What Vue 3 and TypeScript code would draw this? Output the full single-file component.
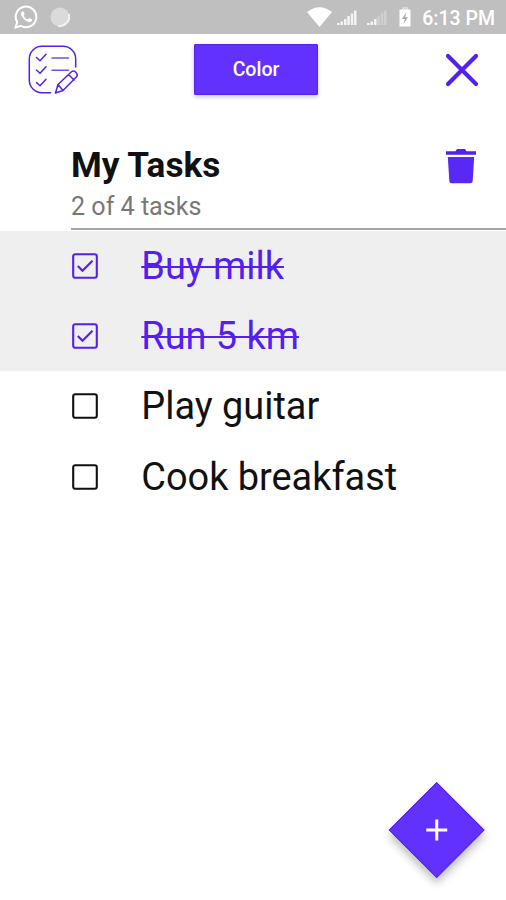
<script setup lang="ts">
import { computed, ref } from 'vue'

interface Task {
  id: number
  title: string
  done: boolean
}

const tasks = ref<Task[]>([
  { id: 1, title: 'Buy milk', done: true },
  { id: 2, title: 'Run 5 km', done: true },
  { id: 3, title: 'Play guitar', done: false },
  { id: 4, title: 'Cook breakfast', done: false },
])

const doneCount = computed(() => tasks.value.filter((t) => t.done).length)

function toggle(task: Task): void {
  task.done = !task.done
}
</script>

<template>
  <div class="screen">
    <header class="status">
      <svg class="whatsapp" viewBox="0 0 24 24">
        <path d="M1.5 22.5 3.2 17.2A10.3 10.3 0 1 1 7 20.9Z" fill="none" stroke="#fff" stroke-width="2" />
        <path d="M8.2 6.4c-1.8 1-1.5 3.4.4 6.1 2.4 3.4 5.6 5 7.8 4.4 1.3-.4 1.900-1.600 1.600-2.500l-2.700-1.400-1.400 1.500c-2-.7-3.300-2-4.200-3.800l1-1.500-1.200-2.700z" fill="#fff" />
      </svg>
      <svg class="sync" viewBox="0 0 20 20">
        <circle cx="10" cy="10" r="9.500" fill="#dadada" />
        <path d="M18.800 7A9.300 9.300 0 0 1 8 18.800" fill="none" stroke="#f4f4f4" stroke-width="1.800" />
      </svg>
      <span class="grow"></span>
      <svg class="wifi" viewBox="0 0 25 20"><path d="M0 5Q12.500-4.500 25 5L12.500 20Z" fill="#fff" /></svg>
      <svg class="signal" viewBox="0 0 20 16">
        <path d="M0 13h2.500v2H0zM3.500 11.500H6V15H3.500zM7 9h2.500v6H7zM10.300 6h2.500v9h-2.500zM13.800 3.500h2.500V15h-2.500zM17 .5h2.500V15H17z" fill="#f4f4f4" />
      </svg>
      <svg class="signal second" viewBox="0 0 20 16">
        <path d="M0 13h2.500v2H0zM3.500 11.500H6V15H3.500zM7 9h2.500v6H7z" fill="#f4f4f4" />
        <path d="M10.300 6h2.500v9h-2.500zM13.800 3.500h2.500V15h-2.500zM17 .5h2.500V15H17z" fill="#d0d0d0" />
      </svg>
      <svg class="battery" viewBox="0 0 12 20">
        <path d="M3 0h6v3H3z" fill="#d8d8d8" />
        <path d="M.5 2.500h11v17H.5z" fill="#fff" />
        <path d="M7.500 5 3 12h2.800L4.500 17 9 10.200H6.200z" fill="#a9a9a9" />
      </svg>
      <span class="time">6:13 PM</span>
    </header>

    <nav class="toolbar">
      <svg class="logo" viewBox="0 0 52 50">
        <g fill="none" stroke="#5322e6" stroke-width="1.500" stroke-linecap="round" stroke-linejoin="round">
          <path d="M22.500 47.700H14A12.600 12.600 0 0 1 1.300 35V14A12.600 12.600 0 0 1 14 1.300h21A12.600 12.600 0 0 1 47.700 14v8" />
          <path d="m8.500 12.500 3.500 3.300 6-6.500M8.500 25l3.500 3.300 6-6.500M8.500 37.500l3.500 3.300 6-6.500" />
          <path d="M24 13h16.500M24 25.300h16.500" stroke="#7250ef" />
          <path d="m27.500 48 2.500-8.500 13.500-12.700q2-1.700 4 .2l1 1.200q1.700 1.900-.2 3.800L35 45.500ZM30 39.500l5 6M40.500 29.500l5.500 5.500" />
        </g>
      </svg>
      <button class="color">Color</button>
      <svg class="close" viewBox="0 0 34 34">
        <path d="M3 3 31 31M31 3 3 31" stroke="#5420f2" stroke-width="4.200" stroke-linecap="round" />
      </svg>
    </nav>

    <section class="heading">
      <div class="titles">
        <h1>My Tasks</h1>
        <p>{{ doneCount }} of {{ tasks.length }} tasks</p>
      </div>
      <svg class="trash" viewBox="0 0 32 36">
        <path d="M1 3.200h9.500L12 1h8l1.500 2.200H31v3.600H1z" fill="#5420ed" />
        <path d="M2.800 9h26.400l-1.500 24q-.2 2.200-2.300 2.200H6.600Q4.500 35.200 4.300 33z" fill="#5828f5" />
      </svg>
    </section>

    <ul class="list">
      <li v-for="task in tasks" :key="task.id" :class="{ done: task.done }" @click="toggle(task)">
        <svg class="box" viewBox="0 0 26 26">
          <rect x="1.200" y="1.200" width="23.600" height="23.600" rx="2" fill="none" stroke="currentColor" stroke-width="2.100" />
          <path v-if="task.done" d="m5.800 13 4.700 4.700L20.500 7.800" fill="none" stroke="currentColor" stroke-width="2.200" />
        </svg>
        <span class="label">{{ task.title }}</span>
      </li>
    </ul>

    <button class="add">
      <svg viewBox="0 0 22 22"><path d="M11 .5v21M.5 11h21" stroke="#fff" stroke-width="3" /></svg>
    </button>
  </div>
</template>

<style>
body {
  margin: 0;
  background: #fff;
}
</style>

<style scoped>
.screen {
  position: relative;
  width: 506px;
  height: 900px;
  overflow: hidden;
  background: #fff;
  color: #111;
  font-family: Roboto, "Liberation Sans", sans-serif;
}
svg {
  display: block;
  flex: none;
}
.status {
  display: flex;
  align-items: center;
  box-sizing: border-box;
  height: 34px;
  padding: 0 11px 0 14px;
  background: #bfbfbf;
}
.whatsapp {
  width: 24px;
  height: 24px;
}
.sync {
  width: 20px;
  height: 20px;
  margin-left: 11.500px;
}
.grow {
  flex: 1;
}
.wifi {
  width: 25px;
  height: 20px;
}
.signal {
  width: 20px;
  height: 16px;
  margin: 2px 0 0 5px;
}
.second {
  margin-left: 10px;
}
.battery {
  width: 12px;
  height: 20px;
  margin: 0 11px 0 12px;
}
.time {
  color: #fff;
  font-size: 19.500px;
  font-weight: 500;
  line-height: 34px;
  padding-top: 4px;
}
.toolbar {
  display: flex;
  justify-content: space-between;
  align-items: center;
  height: 70px;
  padding: 0 27px 0 28px;
}
.logo {
  width: 52px;
  height: 50px;
  margin-top: 2px;
}
button {
  border: 0;
  padding: 0;
  cursor: pointer;
}
.color {
  width: 124px;
  height: 51px;
  margin-left: -13px;
  border-radius: 2px;
  background: #6331fd;
  box-shadow: inset 0 0 0 1px #5520f0, 0 2px 4px rgba(60, 50, 110, 0.28);
  color: #fff;
  font: 500 19.500px/52px Roboto, sans-serif;
}
.close {
  width: 34px;
  height: 34px;
  margin-top: 1px;
}
.heading {
  position: relative;
  display: flex;
  justify-content: space-between;
  box-sizing: border-box;
  height: 127px;
  margin-left: 71px;
  padding: 41px 29px 0 0;
}
.heading::after {
  content: "";
  position: absolute;
  left: 0;
  right: 0;
  bottom: 1px;
  height: 2px;
  background: #a6a6a6;
}
h1 {
  margin: 0;
  font-size: 35.200px;
  font-weight: 700;
  line-height: 40px;
}
p {
  margin: 6px 0 0;
  color: #777;
  font-size: 25.100px;
  line-height: 32px;
}
.trash {
  width: 32px;
  height: 36px;
  margin-top: 3px;
}
.list {
  margin: 0;
  padding: 0;
  list-style: none;
}
li {
  display: flex;
  align-items: center;
  height: 70.200px;
  padding-left: 71.700px;
}
.done {
  background: #efefef;
  color: #5420f0;
}
.box {
  width: 26px;
  height: 26px;
}
.label {
  margin-left: 43.600px;
  font-size: 37.900px;
  line-height: 70px;
}
.done .label {
  text-decoration: line-through;
  text-decoration-thickness: 2px;
}
.add {
  position: absolute;
  left: 402.500px;
  top: 796px;
  display: grid;
  place-items: center;
  width: 67.500px;
  height: 67.500px;
  background: #6331fd;
  box-shadow: inset 0 0 0 1px #5722f2, 4px 4px 9px rgba(0, 0, 0, 0.26);
  transform: rotate(45deg);
}
.add svg {
  width: 22px;
  height: 22px;
  transform: rotate(-45deg);
}
</style>
